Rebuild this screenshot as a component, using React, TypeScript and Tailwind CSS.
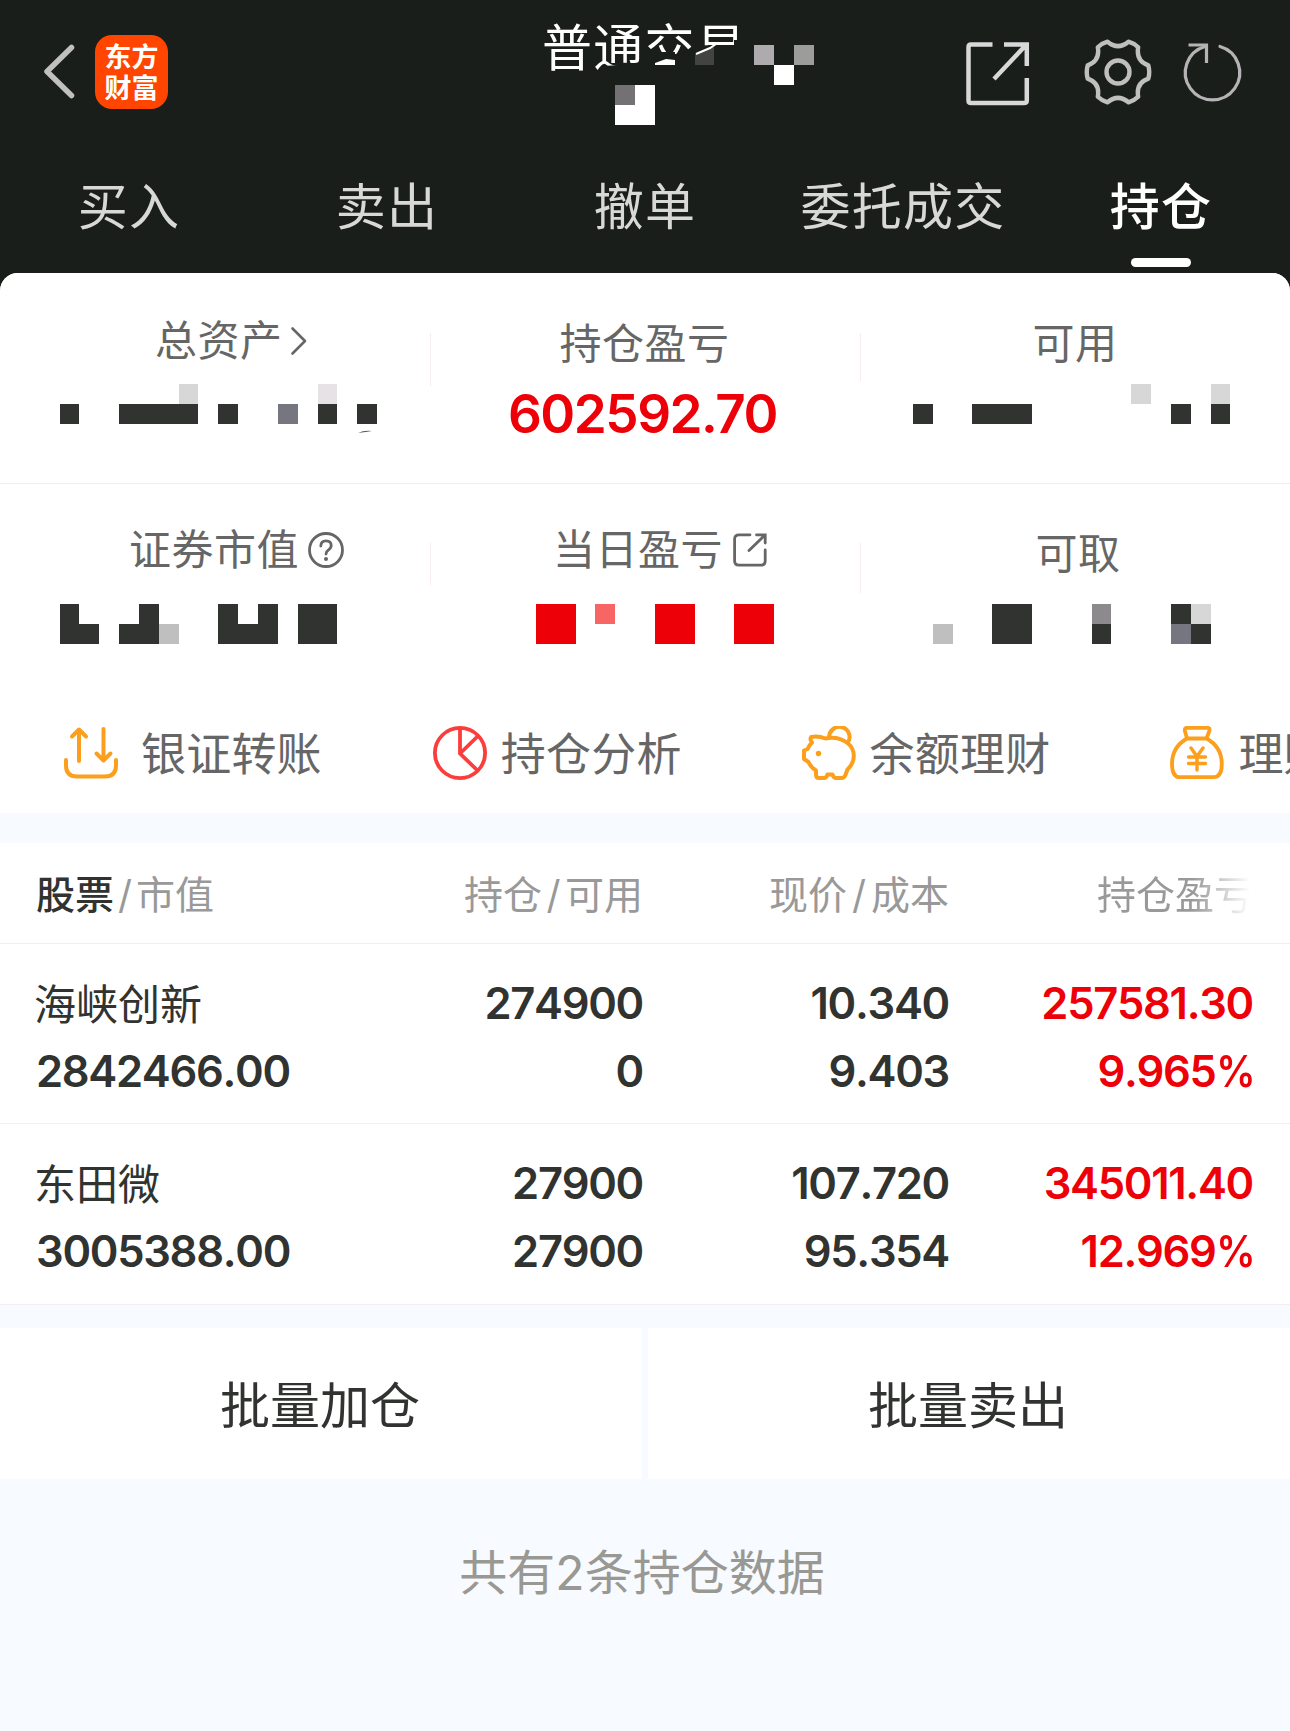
import clsx from 'clsx'
import React from 'react'

type Block = [x: number, y: number, w: number, h: number, color: string]

type Holding = {
  name: string
  value: string
  amount: string
  usable: string
  price: string
  cost: string
  profit: string
  rate: string
}

const INK = '#313330'
const RED = '#ee0008'

const tabs = ['买入', '卖出', '撤单', '委托成交', '持仓']

const holdings: Holding[] = [
  {
    name: '海峡创新',
    value: '2842466.00',
    amount: '274900',
    usable: '0',
    price: '10.340',
    cost: '9.403',
    profit: '257581.30',
    rate: '9.965',
  },
  {
    name: '东田微',
    value: '3005388.00',
    amount: '27900',
    usable: '27900',
    price: '107.720',
    cost: '95.354',
    profit: '345011.40',
    rate: '12.969',
  },
]

// censored amounts, each one is drawn in a 430x40 strip
const totalBlocks: Block[] = [
  [60, 20, 19, 20, INK],
  [119, 20, 79, 20, INK],
  [179, 0, 19, 20, '#d7d7d7'],
  [218, 20, 20, 20, INK],
  [278, 20, 20, 20, '#757680'],
  [318, 0, 19, 20, '#e6e2e6'],
  [318, 20, 19, 20, INK],
  [357, 20, 20, 20, INK],
]
const usableBlocks: Block[] = [
  [53, 20, 20, 20, INK],
  [112, 20, 60, 20, INK],
  [271, 0, 20, 20, '#d7d7d7'],
  [311, 20, 20, 20, INK],
  [351, 0, 19, 20, '#d7d7d7'],
  [351, 20, 19, 20, INK],
]
const marketBlocks: Block[] = [
  [60, 0, 19, 20, INK],
  [60, 20, 39, 20, INK],
  [139, 0, 20, 20, INK],
  [119, 20, 40, 20, INK],
  [159, 20, 20, 20, '#bfbfbf'],
  [218, 0, 20, 20, INK],
  [258, 0, 20, 20, INK],
  [218, 20, 60, 20, INK],
  [298, 0, 39, 40, INK],
]
const todayBlocks: Block[] = [
  [106, 0, 40, 40, RED],
  [165, 0, 20, 20, '#f86565'],
  [225, 0, 40, 40, RED],
  [304, 0, 40, 40, RED],
]
const cashBlocks: Block[] = [
  [73, 20, 20, 20, '#bfbfbf'],
  [132, 0, 40, 40, INK],
  [232, 0, 19, 20, '#8d8a8d'],
  [232, 20, 19, 20, INK],
  [311, 0, 20, 20, INK],
  [331, 0, 20, 20, '#d7d7d7'],
  [311, 20, 20, 20, '#757680'],
  [331, 20, 20, 20, INK],
]

const Mosaic: React.FC<{ blocks: Block[]; children?: React.ReactNode }> = ({
  blocks,
  children,
}) => (
  <svg
    className="block overflow-visible"
    width="430"
    height="40"
    viewBox="0 0 430 40"
  >
    {blocks.map(([x, y, w, h, color], i) => (
      <rect key={i} x={x} y={y} width={w} height={h} fill={color} />
    ))}
    {children}
  </svg>
)

const BackIcon = () => (
  <svg width="34" height="56" viewBox="0 0 34 56" fill="none">
    <path
      d="M29.5 4.5 5 28.5l24.5 24"
      stroke="#c0c0c0"
      strokeWidth="5.5"
      strokeLinecap="round"
      strokeLinejoin="round"
    />
  </svg>
)

const ShareIcon = () => (
  <svg width="64" height="64" viewBox="0 0 64 64" fill="none">
    <path
      d="M26.500 2.500H5Q2.500 2.500 2.500 5V58.500Q2.500 61 5 61H58Q60.800 61 60.800 58.500V36"
      stroke="#d8d8d8"
      strokeWidth="4.500"
    />
    <path
      d="M38 2.500H60.800V24M59.500 3.500 28 37"
      stroke="#d8d8d8"
      strokeWidth="4.500"
    />
  </svg>
)

const GearIcon = () => (
  <svg width="68" height="66" viewBox="0 0 68 66" fill="none">
    <g stroke="#c0bfbf" strokeWidth="4.400" strokeLinejoin="round">
      <path d="M23.500 2.700Q34 11.500 44.500 2.700Q50.500 4.500 54.200 8.200Q51.800 22 64.300 26.300Q66.200 33 64.300 39.700Q51.800 44 54.200 57.800Q50.500 61.500 44.500 63.300Q34 54.500 23.500 63.300Q17.500 61.500 13.800 57.800Q16.200 44 3.700 39.700Q1.800 33 3.700 26.300Q16.200 22 13.800 8.200Q17.500 4.500 23.500 2.700Z" />
      <circle cx="34" cy="33" r="11.500" />
    </g>
  </svg>
)

const ReloadIcon = () => (
  <svg
    className="overflow-visible"
    width="60"
    height="60"
    viewBox="0 0 60 60"
    fill="none"
  >
    <g stroke="#b5b3b5" strokeWidth="3.200">
      <path d="M35 4.500A27.200 27.200 0 1 1 20 4.500" strokeLinecap="round" />
      <path d="M3.500 3H21.500V21" />
    </g>
  </svg>
)

const TransferIcon = () => (
  <svg width="54" height="54" viewBox="0 0 54 54" fill="none">
    <g
      stroke="#fb9f1c"
      strokeWidth="4"
      strokeLinecap="round"
      strokeLinejoin="round"
    >
      <path d="M15 35V3.500M8 10.500 15 3.500 22 10.500" />
      <path d="M39.500 3V34.500M32.500 27.500 39.500 34.500 46.500 27.500" />
      <path d="M2 34v5.500Q2 50.500 13 50.500H41Q52 50.500 52 39.500V34" />
    </g>
  </svg>
)

const PieIcon = () => (
  <svg width="54" height="54" viewBox="0 0 54 54" fill="none">
    <g stroke="#fb3d3c" strokeWidth="3.800">
      <circle cx="27" cy="27" r="25.100" />
      <path d="M27 2V27.500L44.500 44.500M27 27.500 45 10" />
    </g>
  </svg>
)

const PiggyIcon = () => (
  <svg width="54" height="54" viewBox="0 0 54 54" fill="none">
    <g stroke="#fb9f1c" strokeWidth="4" strokeLinejoin="round">
      <path d="M23.500 12.500Q16 9.500 9.200 11Q7.500 13.500 10 16.500Q7 19.500 5.600 23L2 24.500V33L6.500 36Q8.500 41 14 44.500V48.500Q14 52 17 52H22Q24.500 52 25.500 48.500H30.500Q31.500 52 34 52H39.500Q42 52 43.200 49.500L45.500 43.500Q51.800 37.500 51.800 30Q51.800 22 45.500 17Q36 9.800 23.500 12.500Z" />
      <path d="M27.200 12A10.200 10.200 0 1 1 46 16.500" />
    </g>
    <circle cx="16.500" cy="27.500" r="2.700" fill="#fb9f1c" />
  </svg>
)

const MoneyBagIcon = () => (
  <svg width="54" height="54" viewBox="0 0 54 54" fill="none">
    <g stroke="#fb9f1c" strokeWidth="3.800" strokeLinejoin="round">
      <path d="M17 12.500 14.800 4.500Q14.500 1.800 17 1.800H37.500Q40 1.800 39.500 4.500L36.500 12.500" />
      <path d="M17 12.500H36.500Q51.800 21 51.800 38Q51.800 51.200 43.500 51.200H10Q2 51.200 2 38Q2 21 17 12.500Z" />
      <path
        d="M21 22 27 30.500 33 22M27 30.500V44M18.500 31H35.500M18.500 37.500H35.500"
        strokeLinecap="round"
        strokeWidth="3.400"
      />
    </g>
  </svg>
)

const QuestionIcon = () => (
  <svg width="36" height="36" viewBox="0 0 36 36" fill="none">
    <g stroke="#666666" strokeWidth="2.800" strokeLinecap="round">
      <circle cx="18" cy="18" r="16.500" />
      <path d="M12.800 14Q12.800 8.800 18 8.800Q23.200 8.800 23.200 13.500Q23.200 16 20.500 17.800Q18 19.500 18 22" />
    </g>
    <circle cx="18" cy="27" r="2" fill="#666666" />
  </svg>
)

const OpenIcon = () => (
  <svg width="34" height="34" viewBox="0 0 34 34" fill="none">
    <g stroke="#666666" strokeWidth="2.800" strokeLinecap="round">
      <path d="M17 1.800H6Q1.600 1.800 1.600 6V28Q1.600 32.200 6 32.200H28Q32.200 32.200 32.200 28V17" />
      <path d="M23.500 1.800H32.200V10M32 2 16 17.500" />
    </g>
  </svg>
)

const actions = [
  { label: '银证转账', icon: <TransferIcon />, gap: 'gap-[23px]' },
  { label: '持仓分析', icon: <PieIcon />, gap: 'gap-[14px]' },
  { label: '余额理财', icon: <PiggyIcon />, gap: 'gap-[14px]' },
  { label: '理财', icon: <MoneyBagIcon />, gap: 'gap-[14px]' },
]

const Header = () => (
  <header className="flex h-[273px] flex-col">
    <div className="relative flex h-[145px] items-start">
      <div className="mt-[43px] ml-[42px]">
        <BackIcon />
      </div>
      <div className="mt-[35px] ml-[19px] flex h-[74px] w-[73px] flex-col items-center justify-center rounded-[17px] bg-[#ff4500] pt-[2px] text-[27px] leading-[31px] font-bold text-white">
        <span>东方</span>
        <span>财富</span>
      </div>
      <h1 className="mt-[18px] ml-[374px] w-[273px] text-[50px] leading-[60px] tracking-[1.2px] text-white">
        普通交易
      </h1>
      <div className="mt-[42px] ml-[151px]">
        <ShareIcon />
      </div>
      <div className="mt-[39px] ml-[54px]">
        <GearIcon />
      </div>
      <div className="mt-[42px] ml-[33px]">
        <ReloadIcon />
      </div>
      {/* mosaic over the account name */}
      <svg
        className="absolute top-[40px] left-[590px]"
        width="240"
        height="90"
        viewBox="0 0 240 90"
      >
        <path
          d="M13 26 48 24V22H65V12H85V14H98L118 6V5H144V0H160V50H13Z"
          fill="#191e1a"
        />
        <path d="M65 23 76 19 85 20V25H65Z" fill="#fff" />
        <path d="M105 14 118 9 124 5V25H105Z" fill="#434441" />
        <path d="M106 14 120 8 126 4" stroke="#fff" strokeWidth="2" />
        <rect x="164" y="5" width="20" height="20" fill="#aeabae" />
        <rect x="204" y="5" width="20" height="20" fill="#9c9d9b" />
        <rect x="184" y="25" width="20" height="20" fill="#fff" />
        <rect x="25" y="45" width="40" height="40" fill="#fff" />
        <rect x="25" y="45" width="20" height="20" fill="#747174" />
      </svg>
    </div>
    <nav className="grid grow grid-cols-5">
      {tabs.map((tab) => {
        const active = tab === '持仓'
        return (
          <div
            key={tab}
            className={clsx(
              'flex flex-col items-center pt-[32px] text-[50px] leading-[60px] tracking-[1.2px]',
              active ? 'font-medium text-white' : 'text-[#d8d8d8]'
            )}
          >
            {tab}
            {active && (
              <span className="mt-[21px] h-[9px] w-[60px] rounded-full bg-white" />
            )}
          </div>
        )
      })}
    </nav>
  </header>
)

const Label: React.FC<{ className?: string; children: React.ReactNode }> = ({
  className,
  children,
}) => (
  <div
    className={clsx(
      'flex h-[50px] items-center text-[42px] leading-[50px] tracking-[0.5px] text-[#666666]',
      className
    )}
  >
    {children}
  </div>
)

const Summary = () => (
  <section>
    <div className="grid h-[211px] grid-cols-3 border-b border-[#efefef]">
      <div>
        <Label className="mt-[43px] pl-[155px]">
          总资产
          <svg
            className="ml-[7px]"
            width="18"
            height="30"
            viewBox="0 0 18 30"
            fill="none"
          >
            <path
              d="M2.500 2.500 15 15 2.500 27.500"
              stroke="#666666"
              strokeWidth="2.600"
              strokeLinecap="round"
              strokeLinejoin="round"
            />
          </svg>
        </Label>
        <div className="mt-[18px]">
          <Mosaic blocks={totalBlocks}>
            <path d="M358 49Q364 46 372 47Q366 48 358 49" fill="#555" />
          </Mosaic>
        </div>
      </div>
      <div className="flex items-start">
        <span className="mt-[60px] h-[53px] w-px bg-[#f9ecef]" />
        <div className="grow pr-[2px]">
          <Label className="mt-[46px] justify-center">持仓盈亏</Label>
          <div className="mt-[15px] pr-[4px] text-center text-[53px] leading-[60px] font-[570] tracking-[-1.5px] text-[#ee0008]">
            602592.70
          </div>
        </div>
      </div>
      <div className="flex items-start">
        <span className="mt-[60px] h-[48px] w-px bg-[#f9ecef]" />
        <div className="-ml-px">
          <Label className="mt-[46px] justify-center">可用</Label>
          <div className="mt-[15px]">
            <Mosaic blocks={usableBlocks} />
          </div>
        </div>
      </div>
    </div>
    <div className="grid h-[202px] grid-cols-3">
      <div>
        <Label className="mt-[41px] pl-[129px]">
          证券市值
          <span className="ml-[9px]">
            <QuestionIcon />
          </span>
        </Label>
        <div className="mt-[29px]">
          <Mosaic blocks={marketBlocks} />
        </div>
      </div>
      <div className="flex items-start">
        <span className="mt-[59px] h-[42px] w-px bg-[#f9ecef]" />
        <div className="-ml-px">
          <Label className="mt-[41px] pl-[123px]">
            当日盈亏
            <span className="ml-[10px]">
              <OpenIcon />
            </span>
          </Label>
          <div className="mt-[29px]">
            <Mosaic blocks={todayBlocks} />
          </div>
        </div>
      </div>
      <div className="flex items-start">
        <span className="mt-[59px] h-[50px] w-px bg-[#f9ecef]" />
        <div className="-ml-px">
          <Label className="mt-[45px] justify-center pl-[6px]">可取</Label>
          <div className="mt-[25px]">
            <Mosaic blocks={cashBlocks} />
          </div>
        </div>
      </div>
    </div>
  </section>
)

const Actions = () => (
  <section className="flex h-[127px] overflow-hidden pl-[64px]">
    {actions.map(({ label, icon, gap }) => (
      <div
        key={label}
        className={clsx(
          'flex h-[134px] w-[368.8px] shrink-0 items-center text-[45px] leading-[54px] tracking-[0.2px] whitespace-nowrap text-[#666666]',
          gap
        )}
      >
        {icon}
        <span className="pt-[3px]">{label}</span>
      </div>
    ))}
  </section>
)

const columns = 'grid grid-cols-[343px_264px_306px_304px] px-[36px]'

const Holdings = () => (
  <section className="bg-white">
    <div
      className={clsx(
        columns,
        'h-[101px] items-center border-b border-[#f4eef1] pt-[3px] text-right text-[39px] leading-[48px] whitespace-nowrap text-[#999999]'
      )}
    >
      <div className="text-left">
        <span className="font-medium text-[#313330]">股票</span>
        <span className="mx-[4px]">/</span>市值
      </div>
      <div>
        持仓<span className="mx-[4.5px]">/</span>可用
      </div>
      <div>
        现价<span className="mx-[5px]">/</span>成本
      </div>
      <div className="bg-linear-to-r from-[#999999] from-80% to-white to-[99%] bg-clip-text text-transparent">
        持仓盈亏
      </div>
    </div>
    {holdings.map((item) => (
      <div
        key={item.name}
        className={clsx(
          columns,
          'h-[180.300px] border-b border-[#f7ecef] pt-[25px] text-right text-[43.500px] leading-[68px] font-[570] tracking-[-1.3px] text-[#313330] [font-kerning:none]'
        )}
      >
        <div className="text-left">
          <div className="-ml-[2px] h-[68px] pt-[2px] text-[42px] font-normal tracking-normal">
            {item.name}
          </div>
          <div>{item.value}</div>
        </div>
        <div>
          <div>{item.amount}</div>
          <div>{item.usable}</div>
        </div>
        <div>
          <div>{item.price}</div>
          <div>{item.cost}</div>
        </div>
        <div className="text-[#ee0008]">
          <div>{item.profit}</div>
          <div className="-mr-[1px]">
            {item.rate}
            <span className="-ml-[4px] inline-block origin-right scale-x-90">
              %
            </span>
          </div>
        </div>
      </div>
    ))}
  </section>
)

const App: React.FC = () => {
  return (
    <div className="h-[1731px] w-[1290px] overflow-hidden bg-[#191e1a] font-['Inter','Noto_Sans_CJK_SC',sans-serif]">
      <Header />
      <main className="h-[1458px] overflow-hidden rounded-t-[18px] bg-[#f7faff]">
        <div className="bg-white">
          <Summary />
          <Actions />
        </div>
        <div className="h-[30px]" />
        <Holdings />
        <div className="mt-[23px] grid h-[151px] grid-cols-2 gap-[6px] text-[50px] leading-[60px] text-[#313330]">
          <button className="bg-white pt-[6px] pr-[2px]">批量加仓</button>
          <button className="bg-white pt-[6px] pr-[2px]">批量卖出</button>
        </div>
        <p className="mt-[64px] pr-[6px] text-center text-[48px] leading-[60px] text-[#999893]">
          共有2条持仓数据
        </p>
      </main>
    </div>
  )
}

export default App
